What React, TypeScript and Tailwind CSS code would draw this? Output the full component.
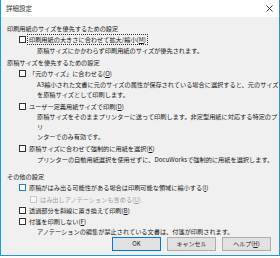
import type { ReactNode } from "react";

const jp = { fontFamily: '"Noto Sans CJK JP", "Noto Sans", sans-serif' };

function Box({ state = "normal" }: { state?: "normal" | "hover" | "disabled" }) {
  const cls =
    state === "hover"
      ? "border-[#1a7fd4] bg-white"
      : state === "disabled"
        ? "border-[#c8c8c8] bg-[#f7f7f7]"
        : "border-[#333333] bg-white";
  return <span className={`inline-block w-[7px] h-[7px] border ${cls} shrink-0`} />;
}

function Check({ children, state, focus }: { children: ReactNode; state?: "normal" | "hover" | "disabled"; focus?: boolean }) {
  return (
    <div className="flex items-center h-[11px] pl-[18px] gap-[2px]">
      <Box state={state} />
      <span className={`${focus ? "outline outline-1 outline-dotted outline-[#333]" : ""} px-[1px] leading-[9px]`}>{children}</span>
    </div>
  );
}

function Desc({ children, className = "" }: { children: ReactNode; className?: string }) {
  return <div className={`pl-[36px] leading-[10px] ${className}`}>{children}</div>;
}

function Heading({ children, className = "" }: { children: ReactNode; className?: string }) {
  return <div className={`pl-[6px] h-[11px] leading-[11px] ${className}`}>{children}</div>;
}

function Btn({ children, primary }: { children: ReactNode; primary?: boolean }) {
  return (
    <button
      type="button"
      className={`w-[49px] h-[14px] border ${primary ? "border-[#0078d7]" : "border-[#adadad]"} bg-[#e1e1e1] text-[6px] leading-[12px] text-[#222]`}
      style={jp}
    >
      {children}
    </button>
  );
}

export default function App() {
  return (
    <div className="w-[280px] h-[257px] bg-white">
      <div
        className="w-[280px] h-[256px] border-x border-b border-[#1c97e0] bg-[#f0f0f0] flex flex-col text-[6.2px] text-[#1a1a1a]"
        style={jp}
      >
        <div className="h-[17px] bg-white flex items-center justify-between pl-[5px] pr-[6px]">
          <span className="text-[6.5px] text-[#333]">詳細設定</span>
          <svg width="7" height="7" viewBox="0 0 7 7">
            <path d="M0.5 0.5 L6.5 6.5 M6.5 0.5 L0.5 6.5" stroke="#222" strokeWidth="0.9" />
          </svg>
        </div>

        <div className="flex flex-col pt-[6px]">
          <Heading>印刷用紙のサイズを優先するための設定</Heading>
          <Check focus>
            印刷用紙の大きさに合わせて拡大/縮小(<u>M</u>)
          </Check>
          <Desc className="h-[11px] leading-[11px]">原稿サイズにかかわらず印刷用紙のサイズが優先されます。</Desc>

          <Heading className="mt-[1px]">原稿サイズを優先するための設定</Heading>
          <Check>
            「元のサイズ」に合わせる(<u>O</u>)
          </Check>
          <Desc className="pt-[1px]">
            A3縮小された文書に元のサイズの属性が保存されている場合に選択すると、元のサイズ
            <br />
            を原稿サイズとして印刷します。
          </Desc>
          <div className="mt-[1px]">
            <Check>
              ユーザー定義用紙サイズで印刷(<u>D</u>)
            </Check>
          </div>
          <Desc>
            原稿サイズをそのままプリンターに送って印刷します。非定型用紙に対応する特定のプリ
            <br />
            ンターでのみ有効です。
          </Desc>
          <div className="mt-[1px]">
            <Check>
              原稿サイズに合わせて強制的に用紙を選択(<u>K</u>)
            </Check>
          </div>
          <Desc className="pt-[1px]">プリンターの自動用紙選択を使用せずに、DocuWorksで強制的に用紙を選択します。</Desc>

          <Heading className="mt-[6px]">その他の設定</Heading>
          <Check state="hover">
            原稿がはみ出る可能性がある場合は印刷可能な領域に縮小する(<u>I</u>)
          </Check>
          <div className="flex items-center h-[11px] pl-[29px] gap-[3px] mt-[1px]">
            <Box state="disabled" />
            <span className="text-[#a0a0a0]">
              はみ出しアノテーションも含める(<u>U</u>)
            </span>
          </div>
          <Check>
            透過部分を斜線に置き換えて印刷(<u>B</u>)
          </Check>
          <Check>
            付箋を印刷しない(<u>F</u>)
          </Check>
          <Desc>アノテーションの編集が禁止されている文書は、付箋が印刷されます。</Desc>
        </div>

        <div className="flex justify-end gap-[6px] pr-[8px] mt-auto mb-[4px]">
          <Btn primary>OK</Btn>
          <Btn>キャンセル</Btn>
          <Btn>
            ヘルプ(<u>H</u>)
          </Btn>
        </div>
      </div>
    </div>
  );
}
